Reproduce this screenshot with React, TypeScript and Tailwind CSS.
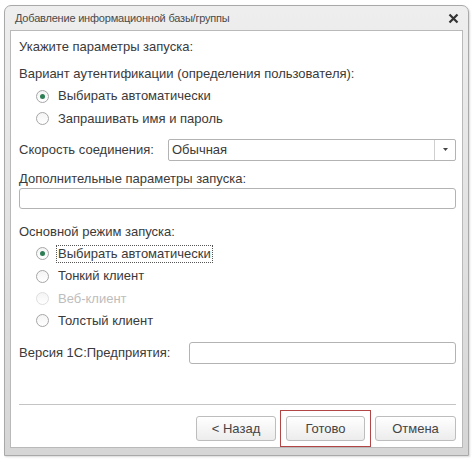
import React from "react";

const font = { fontFamily: '"Liberation Sans", Arial, sans-serif' };

function Radio({
  label,
  checked,
  disabled,
  focused,
}: {
  label: string;
  checked?: boolean;
  disabled?: boolean;
  focused?: boolean;
}) {
  return (
    <div className="flex h-[22.3px] items-center pl-[17px]">
      <span
        className={`flex h-[13px] w-[13px] items-center justify-center rounded-full border bg-gradient-to-b from-[#f4f4f4] to-white ${
          disabled ? "border-[#dedede]" : "border-[#a6a6a6]"
        }`}
      >
        {checked && <span className="h-[5px] w-[5px] rounded-full bg-[#2f7d55]" />}
      </span>
      <span
        className={`ml-[7px] px-[1px] leading-[16px] ${
          focused ? "border border-dotted border-[#555]" : "border border-transparent"
        } ${disabled ? "text-[#bdbdbd]" : "text-[#3a3a3a]"}`}
      >
        {label}
      </span>
    </div>
  );
}

function Button({ children }: { children: React.ReactNode }) {
  return (
    <button className="flex h-[25px] w-full items-center justify-center rounded-[3px] border border-[#bdbdbd] bg-gradient-to-b from-white to-[#ececec] text-[13px] text-[#444]">
      {children}
    </button>
  );
}

export default function App() {
  return (
    <div className="h-[462px] w-[474px] bg-white pl-[4px] pt-[5px]" style={font}>
      <div className="flex h-[451px] w-[465px] flex-col rounded-t-[7px] border border-[#a9a9a9] bg-gradient-to-b from-[#eeeeee] to-[#d6d6d6] shadow-[1px_1px_2px_rgba(0,0,0,0.15)]">
        {/* title bar */}
        <div className="flex h-[26px] items-center justify-between pl-[10px] pr-[9px]">
          <span className="text-[11px] tracking-[-0.2px] text-[#4a4a4a]">
            Добавление информационной базы/группы
          </span>
          <svg width="11" height="11" viewBox="0 0 11 11">
            <path d="M1.5 1.5 L9.5 9.5 M9.5 1.5 L1.5 9.5" stroke="#333" strokeWidth="2.2" />
          </svg>
        </div>

        {/* client area */}
        <div className="mx-[5px] mb-[7px] flex flex-1 flex-col border border-[#b9b9b9] bg-white pl-[8px] pr-[6px] text-[13px] text-[#3a3a3a]">
          <div className="mt-[6px] flex h-[20px] items-center">Укажите параметры запуска:</div>
          <div className="mt-[7px] flex h-[20px] items-center">
            Вариант аутентификации (определения пользователя):
          </div>
          <div className="mt-[1px]">
            <Radio label="Выбирать автоматически" checked />
            <Radio label="Запрашивать имя и пароль" />
          </div>

          <div className="mt-[9px] flex h-[22px] items-center">
            <span className="w-[149px]">Скорость соединения:</span>
            <div className="flex h-[22px] flex-1 items-center rounded-[2px] border border-[#b3b3b3]">
              <span className="flex-1 pl-[3px]">Обычная</span>
              <span className="flex h-full w-[21px] items-center justify-center border-l border-[#cfcfcf]">
                <svg width="5" height="3" viewBox="0 0 5 3">
                  <path d="M0 0 H5 L2.5 3 Z" fill="#444" />
                </svg>
              </span>
            </div>
          </div>

          <div className="mt-[8px] flex h-[19px] items-center">Дополнительные параметры запуска:</div>
          <div className="h-[21px] rounded-[3px] border border-[#b3b3b3]" />

          <div className="mt-[13px] flex h-[20px] items-center">Основной режим запуска:</div>
          <div className="mt-[1px]">
            <Radio label="Выбирать автоматически" checked focused />
            <Radio label="Тонкий клиент" />
            <Radio label="Веб-клиент" disabled />
            <Radio label="Толстый клиент" />
          </div>

          <div className="mt-[10px] flex h-[22px] items-center">
            <span className="w-[170px]">Версия 1С:Предприятия:</span>
            <div className="h-[22px] flex-1 rounded-[3px] border border-[#b3b3b3]" />
          </div>

          <div className="mt-[40px] h-px bg-[#c4c4c4]" />

          <div className="mt-[5px] flex items-center justify-end gap-[4px]">
            <div className="w-[80px]">
              <Button>&lt; Назад</Button>
            </div>
            <div className="border border-[#b24646] p-[5px]">
              <div className="w-[79px]">
                <Button>Готово</Button>
              </div>
            </div>
            <div className="w-[81px]">
              <Button>Отмена</Button>
            </div>
          </div>
        </div>
      </div>
    </div>
  );
}
